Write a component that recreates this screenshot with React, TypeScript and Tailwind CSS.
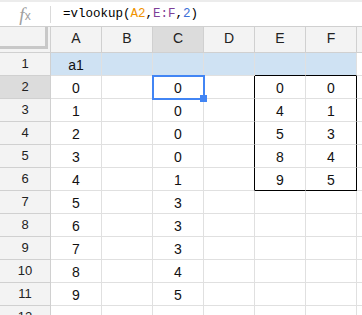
import React from 'react';

const cols = ['A', 'B', 'C', 'D', 'E', 'F'];
const colC = [0, 0, 0, 0, 1, 3, 3, 3, 4, 5];
const tableEF = [
  [0, 0],
  [4, 1],
  [5, 3],
  [8, 4],
  [9, 5],
];
const rows = [1, 2, 3, 4, 5, 6, 7, 8, 9, 10, 11, 12];

function valueAt(row: number, col: string): string {
  if (row === 1) return col === 'A' ? 'a1' : '';
  const i = row - 2;
  if (i > 9) return '';
  if (col === 'A') return String(i);
  if (col === 'C') return String(colC[i]);
  if (i < 5 && col === 'E') return String(tableEF[i][0]);
  if (i < 5 && col === 'F') return String(tableEF[i][1]);
  return '';
}

function FormulaBar() {
  return (
    <div className="flex h-[27px] items-center border-t-2 border-b border-t-[#ececec] border-b-[#d0d0d0] bg-white">
      <div className="flex w-[50px] items-center justify-center text-[#a0a0a0]">
        <span className="font-['Liberation_Serif',serif] text-[19px] italic leading-none">f</span>
        <span className="mt-[3px] font-['Liberation_Sans',sans-serif] text-[12px] leading-none">x</span>
      </div>
      <div className="h-[17px] w-px bg-[#dadada]" />
      <div className="pl-[12px] font-['Liberation_Mono',monospace] text-[12.5px] text-black">
        =vlookup(<span className="text-[#f09300]">A2</span>,<span className="text-[#7e3f98]">E:F</span>,
        <span className="text-[#3d6fd6]">2</span>)
      </div>
    </div>
  );
}

function HeaderRow() {
  return (
    <div className="flex h-[26px]">
      <div className="w-[51px] shrink-0 border-r border-b border-[#d0d0d0] bg-[#f3f3f3]">
        <div className="h-[22px] w-[48px] border-r-[3px] border-b-[3px] border-[#c8c8c8]" />
      </div>
      {cols.map((c) => (
        <div
          key={c}
          className={`flex w-[51px] shrink-0 items-center justify-center border-r border-b border-[#d0d0d0] pb-[2px] text-[14px] text-[#222] ${
            c === 'C' ? 'bg-[#dcdcdc]' : 'bg-[#f3f3f3]'
          }`}
        >
          {c}
        </div>
      ))}
      <div className="w-[20px] shrink-0 border-b border-[#d0d0d0] bg-[#f3f3f3]" />
    </div>
  );
}

function Cell({ row, col }: { row: number; col: string }) {
  const inBox = row >= 2 && row <= 6;
  const rightBlack = (col === 'D' && inBox) || (col === 'F' && inBox);
  const bottomBlack = (col === 'E' || col === 'F') && (row === 1 || row === 6);
  const selected = row === 2 && col === 'C';
  return (
    <div
      className={`relative flex h-[23px] w-[51px] shrink-0 items-center justify-center border-r border-b pt-[2px] text-[14px] text-[#111] ${
        rightBlack ? 'border-r-black' : 'border-r-[#e0e0e0]'
      } ${bottomBlack ? 'border-b-black' : 'border-b-[#e0e0e0]'} ${row === 1 ? 'bg-[#cfe2f3]' : 'bg-white'} ${
        selected ? 'z-10' : ''
      }`}
    >
      {valueAt(row, col)}
      {selected && (
        <div className="absolute -top-[1px] -left-[1px] h-[25px] w-[53px] border-2 border-[#4285f4]">
          <div className="absolute -right-[4px] -bottom-[4px] h-[7px] w-[7px] bg-[#4285f4]" />
        </div>
      )}
    </div>
  );
}

export default function App() {
  return (
    <div className="h-[315px] w-[362px] overflow-hidden bg-white font-['Liberation_Sans',Arial,sans-serif]">
      <FormulaBar />
      <HeaderRow />
      {rows.map((r) => (
        <div key={r} className="flex">
          <div
            className={`flex h-[23px] w-[51px] shrink-0 items-center justify-center border-r border-b border-[#d0d0d0] text-[13px] text-[#222] ${
              r === 2 ? 'bg-[#dcdcdc]' : 'bg-[#f3f3f3]'
            }`}
          >
            {r}
          </div>
          {cols.map((c) => (
            <Cell key={c} row={r} col={c} />
          ))}
          <div className="h-[23px] w-[20px] shrink-0 border-b border-[#e0e0e0] bg-white" />
        </div>
      ))}
    </div>
  );
}
